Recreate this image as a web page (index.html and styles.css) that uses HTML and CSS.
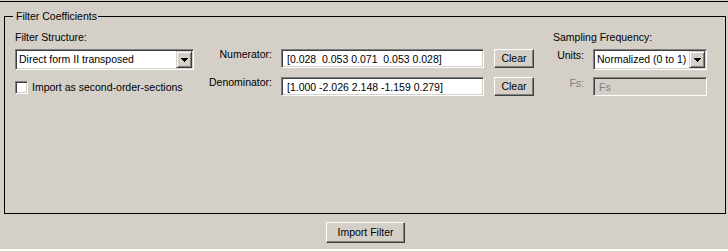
FILE: index.html
```html
<!DOCTYPE html>
<html>
<head>
<meta charset="utf-8">
<link rel="stylesheet" href="styles.css">
</head>
<body>
<div class="topline"></div>
<fieldset class="group">
  <legend>Filter Coefficients</legend>
  <div class="content">
    <div class="col-left">
      <div class="caption">Filter Structure:</div>
      <div class="combo combo-struct">
        <span class="combo-text">Direct form II transposed</span>
        <span class="combo-btn"><svg width="7" height="4" viewBox="0 0 7 4" shape-rendering="crispEdges"><rect x="0" y="0" width="7" height="1"/><rect x="1" y="1" width="5" height="1"/><rect x="2" y="2" width="3" height="1"/><rect x="3" y="3" width="1" height="1"/></svg></span>
      </div>
      <label class="check-row">
        <span class="checkbox"></span>
        <span class="check-label">Import as second-order-sections</span>
      </label>
    </div>
    <div class="col-mid">
      <div class="row">
        <span class="lbl">Numerator:</span>
        <input class="field" type="text" value="[0.028  0.053 0.071  0.053 0.028]">
        <button class="btn btn-clear">Clear</button>
      </div>
      <div class="row">
        <span class="lbl">Denominator:</span>
        <input class="field" type="text" value="[1.000 -2.026 2.148 -1.159 0.279]">
        <button class="btn btn-clear">Clear</button>
      </div>
    </div>
    <div class="col-right">
      <div class="caption">Sampling Frequency:</div>
      <div class="rrow rrow-units">
        <span class="rlbl">Units:</span>
        <div class="combo combo-units">
          <span class="combo-text">Normalized (0 to 1)</span>
          <span class="combo-btn"><svg width="7" height="4" viewBox="0 0 7 4" shape-rendering="crispEdges"><rect x="0" y="0" width="7" height="1"/><rect x="1" y="1" width="5" height="1"/><rect x="2" y="2" width="3" height="1"/><rect x="3" y="3" width="1" height="1"/></svg></span>
        </div>
      </div>
      <div class="rrow rrow-fs">
        <span class="rlbl disabled">Fs:</span>
        <input class="field field-fs" type="text" value="Fs" disabled>
      </div>
    </div>
  </div>
</fieldset>
<div class="footer">
  <button class="btn btn-import">Import Filter</button>
</div>
<div class="bottomline"></div>
</body>
</html>
```
FILE: styles.css
```css
html, body {
  margin: 0;
}
body {
  padding-top: 1px;
  width: 728px;
  height: 252px;
  overflow: hidden;
  box-sizing: border-box;
  background: #d4d0c8;
  color: #000;
  font-family: "Liberation Sans", Arial, sans-serif;
  font-size: 10.5px;
  line-height: 13px;
}
.topline {
  height: 0;
  border-top: 1px solid #000;
}
.group {
  box-sizing: border-box;
  width: 722px;
  margin: 8px 2px 0 4px;
  padding: 0;
  border: 1px solid #000;
  min-width: 0;
}
.group legend {
  margin-left: 8px;
  padding: 0 1px 0 3px;
  line-height: 13px;
  font-size: 10.5px;
}
.content {
  box-sizing: border-box;
  height: 190px;
  display: flex;
  align-items: flex-start;
  padding: 8px 0 0 10px;
}
.caption {
  line-height: 13px;
  white-space: nowrap;
}
.col-left {
  width: 179px;
  display: flex;
  flex-direction: column;
}
.combo {
  box-sizing: border-box;
  height: 21px;
  display: flex;
  align-items: stretch;
  background: #fff;
  border: 1px solid;
  border-color: #808080 #fff #fff #808080;
  box-shadow: inset 1px 1px #404040, inset -1px -1px #d4d0c8;
  padding: 1px;
}
.col-left .combo {
  margin-top: 5px;
}
.combo-struct {
  width: 179px;
}
.combo-text {
  flex: 1;
  padding-left: 2px;
  line-height: 17px;
  white-space: nowrap;
  overflow: hidden;
}
.combo-btn {
  box-sizing: border-box;
  width: 16px;
  height: 17px;
  display: flex;
  align-items: center;
  justify-content: center;
  background: #d4d0c8;
  border: 1px solid;
  border-color: #d4d0c8 #404040 #404040 #d4d0c8;
  box-shadow: inset 1px 1px #fff, inset -1px -1px #808080;
}
.combo-btn svg {
  display: block;
  fill: #000;
  margin-top: 1px;
}
.check-row {
  display: flex;
  align-items: center;
  margin-top: 11px;
}
.checkbox {
  box-sizing: border-box;
  width: 13px;
  height: 13px;
  background: #fff;
  border: 1px solid;
  border-color: #808080 #fff #fff #808080;
  box-shadow: inset 1px 1px #404040, inset -1px -1px #d4d0c8;
}
.check-label {
  margin-left: 4px;
  white-space: nowrap;
  line-height: 13px;
}
.col-mid {
  margin-left: 8px;
  padding-top: 18px;
  display: flex;
  flex-direction: column;
  gap: 9px;
}
.row {
  display: flex;
  align-items: flex-start;
  height: 19px;
}
.lbl {
  width: 70px;
  text-align: right;
  white-space: nowrap;
  margin-top: -1px;
}
.field {
  box-sizing: border-box;
  height: 19px;
  margin: 0;
  padding: 0 0 0 5px;
  background: #fff;
  color: #000;
  font: inherit;
  line-height: 13px;
  outline: none;
  border: 1px solid;
  border-color: #808080 #fff #fff #808080;
  box-shadow: inset 1px 1px #404040, inset -1px -1px #d4d0c8;
  border-radius: 0;
}
.col-mid .field {
  width: 203px;
  margin-left: 9px;
}
.btn {
  box-sizing: border-box;
  margin: 0;
  padding: 0;
  background: #d4d0c8;
  color: #000;
  font: inherit;
  line-height: 13px;
  border: 1px solid;
  border-color: #fff #404040 #404040 #fff;
  box-shadow: inset -1px -1px #808080;
  border-radius: 0;
}
.btn-clear {
  width: 40px;
  height: 19px;
  margin-left: 10px;
}
.col-right {
  margin-left: 19px;
  display: flex;
  flex-direction: column;
}
.rrow {
  display: flex;
  align-items: flex-start;
}
.rrow-units {
  margin-top: 5px;
}
.rrow-fs {
  margin-top: 7px;
}
.rlbl {
  width: 31px;
  text-align: right;
  margin-right: 9px;
  white-space: nowrap;
}
.disabled {
  color: #808080;
}
.combo-units {
  width: 114px;
}
.field-fs {
  width: 114px;
  background: #d4d0c8;
  color: #808080;
  -webkit-text-fill-color: #808080;
  opacity: 1;
}
.footer {
  display: flex;
  justify-content: center;
  padding: 8px 0 0 3px;
}
.btn-import {
  width: 79px;
  height: 21px;
}
.bottomline {
  margin-top: 6px;
  height: 2px;
  background: #fff;
}
```
